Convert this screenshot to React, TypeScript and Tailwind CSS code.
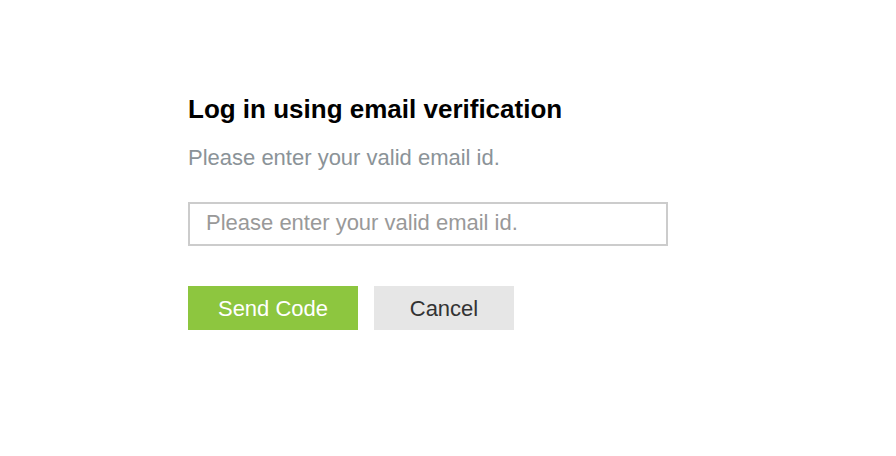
export default function App() {
  return (
    <div className="min-h-[456px] w-[896px] bg-white font-['Liberation_Sans',Arial,sans-serif]">
      <div className="pl-[188px] pt-[94px]">
        <h1 className="text-[26px] font-bold leading-[30px] text-black">Log in using email verification</h1>
        <p className="mt-[21px] text-[22px] leading-[26px] text-[#8b9398]">Please enter your valid email id.</p>
        <input
          type="text"
          placeholder="Please enter your valid email id."
          className="mt-[31px] block h-[44px] w-[480px] border-2 border-[#cccccc] px-[16px] pb-[2px] text-[22px] outline-none placeholder:text-[#999999]"
        />
        <div className="mt-[40px] flex gap-[16px]">
          <button className="h-[44px] w-[170px] bg-[#8dc63f] text-[22px] text-white">Send Code</button>
          <button className="h-[44px] w-[140px] bg-[#e6e6e6] text-[22px] text-[#333333]">Cancel</button>
        </div>
      </div>
    </div>
  );
}
